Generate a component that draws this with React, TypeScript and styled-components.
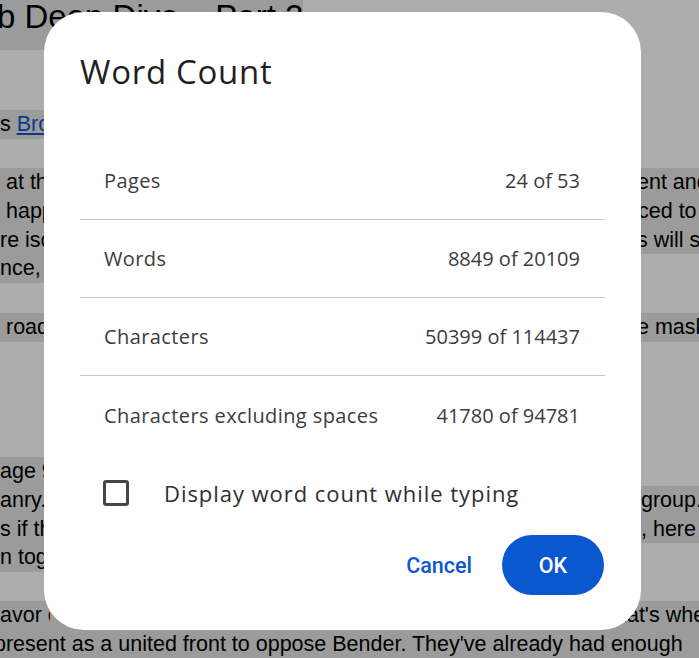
import React from "react";
import styled, { createGlobalStyle } from "styled-components";

const Global = createGlobalStyle`
  html, body {
    margin: 0;
    padding: 0;
    width: 699px;
    height: 658px;
    overflow: hidden;
    background: #ffffff;
  }
  #root {
    width: 699px;
    height: 658px;
    overflow: hidden;
  }
  * { box-sizing: border-box; }
`;

const HL = "#e5e5e5";

/* ---------- document behind the modal ---------- */

const Doc = styled.div`
  width: 699px;
  height: 658px;
  overflow: hidden;
  display: flex;
  flex-direction: column;
  font-family: "Liberation Sans", Arial, sans-serif;
  font-size: 21.5px;
  color: #000;
  background: #ffffff;
`;

const TitleRow = styled.div`
  height: 50px;
  margin-bottom: 60px;
  display: flex;
`;

const TitleMark = styled.span`
  display: inline-block;
  width: 306px;
  margin-left: -3px;
  padding: 0 0 17px 0;
  font-size: 33px;
  line-height: 33px;
  background: ${HL};
  white-space: nowrap;
  overflow: hidden;
`;

const Para = styled.div<{ $after?: number }>`
  display: flex;
  flex-direction: column;
  margin-bottom: ${(p) => p.$after ?? 0}px;
`;

const Line = styled.div<{ $hl?: boolean }>`
  height: 28.75px;
  line-height: 28.75px;
  display: flex;
  justify-content: space-between;
  white-space: nowrap;
  background: ${(p) => (p.$hl ? HL : "transparent")};
`;

const Frag = styled.span<{ $hl?: boolean; $w?: number; $shift?: number }>`
  display: block;
  width: ${(p) => p.$w ?? 50}px;
  margin-left: ${(p) => p.$shift ?? 0}px;
  overflow: hidden;
  white-space: nowrap;
  background: ${(p) => (p.$hl ? HL : "transparent")};
`;

const DocLink = styled.span`
  color: #1155cc;
  text-decoration: underline;
`;

/* ---------- modal ---------- */

const Overlay = styled.div`
  position: fixed;
  inset: 0;
  background: rgba(0, 0, 0, 0.32);
  display: flex;
  align-items: flex-start;
  padding: 12px 0 0 44px;
`;

const Dialog = styled.div`
  width: 597px;
  background: #ffffff;
  border-radius: 40px;
  padding: 40px 36px 35px 36px;
  display: flex;
  flex-direction: column;
`;

const Title = styled.h1`
  margin: 0 0 50px 0;
  font-family: "Open Sans", sans-serif;
  font-weight: 400;
  font-size: 33px;
  line-height: 40px;
  letter-spacing: 0.7px;
  color: #1f1f1f;
`;

const Stats = styled.div`
  display: flex;
  flex-direction: column;
`;

const StatRow = styled.div`
  height: 78px;
  display: flex;
  align-items: center;
  justify-content: space-between;
  padding: 0 25px 0 24px;
  border-bottom: 1px solid #c7c7c7;
  font-family: "Open Sans", sans-serif;
  font-size: 20px;
  color: #3c3c3c;

  &:last-child {
    border-bottom: none;
  }
`;

const StatLabel = styled.span`
  letter-spacing: 0.4px;
`;

const StatValue = styled.span`
  letter-spacing: 0px;
`;

const CheckRow = styled.label`
  height: 78px;
  display: flex;
  align-items: center;
  gap: 35px;
  padding-left: 23px;
  font-family: "Open Sans", sans-serif;
  font-size: 22px;
  letter-spacing: 0.95px;
  color: #2f2f2f;
`;

const Box = styled.span`
  width: 26px;
  height: 26px;
  border: 3px solid #444746;
  border-radius: 3px;
  flex: none;
`;

const Actions = styled.div`
  margin-top: 3px;
  display: flex;
  justify-content: flex-end;
  align-items: center;
  gap: 6px;
  padding-right: 1px;
`;

const Button = styled.button<{ $primary?: boolean }>`
  height: 60px;
  min-width: ${(p) => (p.$primary ? "102px" : "0")};
  padding: 0 24px;
  border: none;
  border-radius: 30px;
  font-family: Roboto, "Open Sans", sans-serif;
  font-weight: 500;
  font-size: 21.5px;
  background: ${(p) => (p.$primary ? "#0b57d0" : "transparent")};
  color: ${(p) => (p.$primary ? "#ffffff" : "#0b57d0")};
  cursor: pointer;
`;

const stats: [string, string][] = [
  ["Pages", "24 of 53"],
  ["Words", "8849 of 20109"],
  ["Characters", "50399 of 114437"],
  ["Characters excluding spaces", "41780 of 94781"],
];

export default function App() {
  return (
    <>
      <Global />
      <Doc>
        <TitleRow>
          <TitleMark>b Deep Dive – Part 2</TitleMark>
        </TitleRow>

        <Para $after={29.25}>
          <Line>
            <Frag $hl>
              s <DocLink>Brooklyn</DocLink>
            </Frag>
          </Line>
        </Para>

        <Para $after={30}>
          <Line $hl>
            <Frag>{"\u00a0"}at the</Frag>
            <Frag $w={62}>ent and</Frag>
          </Line>
          <Line $hl>
            <Frag>{"\u00a0"}happen</Frag>
            <Frag $w={61}>ced to</Frag>
          </Line>
          <Line $hl>
            <Frag>re isolated</Frag>
            <Frag $w={62}>s will s</Frag>
          </Line>
          <Line>
            <Frag $hl>nce, the</Frag>
          </Line>
        </Para>

        <Para $after={115.25}>
          <Line $hl>
            <Frag>{"\u00a0"}road</Frag>
            <Frag $w={62}>e mask</Frag>
          </Line>
        </Para>

        <Para $after={29}>
          <Line>
            <Frag $hl>age 9</Frag>
          </Line>
          <Line $hl>
            <Frag>anry.</Frag>
            <Frag $w={58}>group.</Frag>
          </Line>
          <Line $hl>
            <Frag>s if the</Frag>
            <Frag $w={58}>, here</Frag>
          </Line>
          <Line>
            <Frag $hl>n together</Frag>
          </Line>
        </Para>

        <Para>
          <Line $hl>
            <Frag>avor of</Frag>
            <Frag $w={90}>{"\u00a0"}hat's when</Frag>
          </Line>
          <Line $hl>
            <Frag $w={715} $shift={-6}>
              present as a united front to oppose Bender. They've already had enough
            </Frag>
          </Line>
        </Para>
      </Doc>

      <Overlay>
        <Dialog role="dialog" aria-label="Word Count">
          <Title>Word Count</Title>
          <Stats>
            {stats.map(([label, value]) => (
              <StatRow key={label}>
                <StatLabel>{label}</StatLabel>
                <StatValue>{value}</StatValue>
              </StatRow>
            ))}
          </Stats>
          <CheckRow>
            <Box />
            <span>Display word count while typing</span>
          </CheckRow>
          <Actions>
            <Button>Cancel</Button>
            <Button $primary>OK</Button>
          </Actions>
        </Dialog>
      </Overlay>
    </>
  );
}
